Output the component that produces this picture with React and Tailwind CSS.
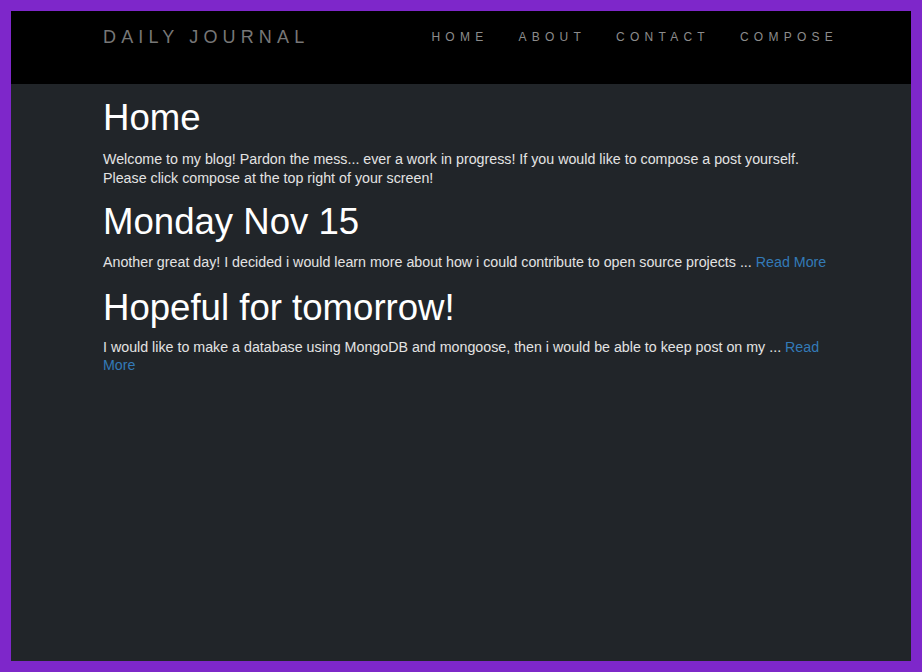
export default function App() {
  const font = { fontFamily: '"Liberation Sans", Arial, sans-serif' };
  return (
    <div className="w-[922px] h-[672px] bg-[#7e27ca] p-[11px]" style={font}>
      <div className="flex h-full flex-col bg-[#212529]">
        <nav className="h-[73px] shrink-0 bg-black pt-[1px]">
          <div className="mx-auto flex h-[50px] w-[720px] items-center justify-between">
            <span className="ml-[2px] text-[18px] leading-[20px] tracking-[5.15px] text-[#777777]">
              DAILY JOURNAL
            </span>
            <ul className="-mr-[32px] flex items-center">
              {["HOME", "ABOUT", "CONTACT", "COMPOSE"].map((l) => (
                <li key={l} className="px-[15px] text-[12px] leading-[20px] tracking-[5.25px] text-[#8c8c8c]">
                  {l}
                </li>
              ))}
            </ul>
          </div>
        </nav>
        <main className="mx-auto w-[740px] pt-[14px] pl-[12px] text-[#e3e3e3]">
          <h1 className="text-[36.6px] leading-[40px] text-white">Home</h1>
          <p className="mt-[12px] text-[14.25px] leading-[18.5px]">
            Welcome to my blog! Pardon the mess... ever a work in progress! If you would like to compose a post yourself. Please click compose at the top right of your screen!
          </p>
          <h1 className="mt-[15px] text-[36.6px] leading-[40px] text-white">Monday Nov 15</h1>
          <p className="mt-[11px] text-[14.25px] leading-[18.5px]">
            Another great day! I decided i would learn more about how i could contribute to open source projects ...{" "}
            <a className="text-[#337ab7]">Read More</a>
          </p>
          <h1 className="mt-[16px] text-[36.6px] leading-[40px] text-white">Hopeful for tomorrow!</h1>
          <p className="mt-[10px] text-[14.25px] leading-[18.5px]">
            I would like to make a database using MongoDB and mongoose, then i would be able to keep post on my ...{" "}
            <a className="text-[#337ab7]">Read More</a>
          </p>
        </main>
      </div>
    </div>
  );
}
